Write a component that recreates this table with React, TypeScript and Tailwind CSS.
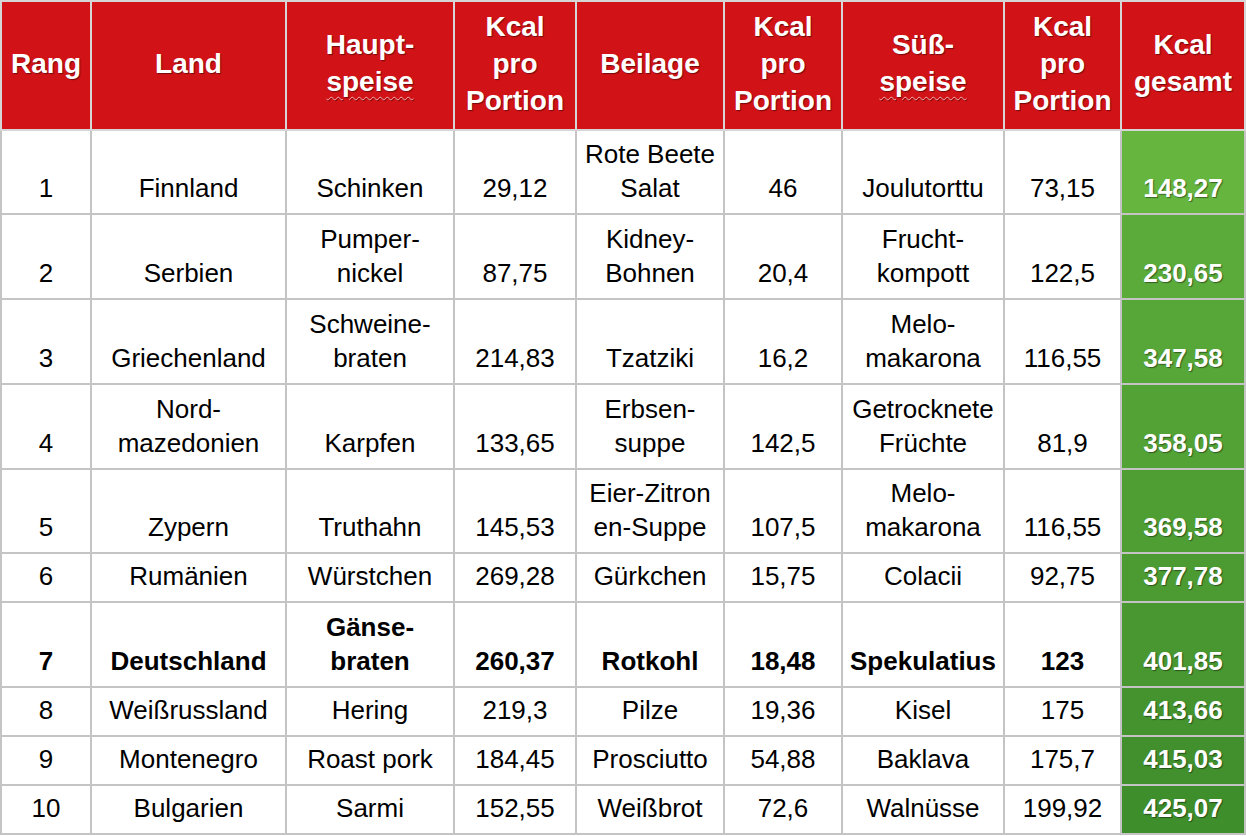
import React from 'react'

type Row = {
  rang: string
  land: string[]
  haupt: string[]
  kcal1: string
  beilage: string[]
  kcal2: string
  suess: string[]
  kcal3: string
  total: string
  h: string
  green: string
  bold?: boolean
}

const rows: Row[] = [
  { rang: '1', land: ['Finnland'], haupt: ['Schinken'], kcal1: '29,12', beilage: ['Rote Beete', 'Salat'], kcal2: '46', suess: ['Joulutorttu'], kcal3: '73,15', total: '148,27', h: 'h-[84px]', green: 'bg-[#65b53f]' },
  { rang: '2', land: ['Serbien'], haupt: ['Pumper-', 'nickel'], kcal1: '87,75', beilage: ['Kidney-', 'Bohnen'], kcal2: '20,4', suess: ['Frucht-', 'kompott'], kcal3: '122,5', total: '230,65', h: 'h-[85px]', green: 'bg-[#5bab3b]' },
  { rang: '3', land: ['Griechenland'], haupt: ['Schweine-', 'braten'], kcal1: '214,83', beilage: ['Tzatziki'], kcal2: '16,2', suess: ['Melo-', 'makarona'], kcal3: '116,55', total: '347,58', h: 'h-[85px]', green: 'bg-[#57a638]' },
  { rang: '4', land: ['Nord-', 'mazedonien'], haupt: ['Karpfen'], kcal1: '133,65', beilage: ['Erbsen-', 'suppe'], kcal2: '142,5', suess: ['Getrocknete', 'Früchte'], kcal3: '81,9', total: '358,05', h: 'h-[85px]', green: 'bg-[#53a236]' },
  { rang: '5', land: ['Zypern'], haupt: ['Truthahn'], kcal1: '145,53', beilage: ['Eier-Zitron', 'en-Suppe'], kcal2: '107,5', suess: ['Melo-', 'makarona'], kcal3: '116,55', total: '369,58', h: 'h-[84px]', green: 'bg-[#4f9e34]' },
  { rang: '6', land: ['Rumänien'], haupt: ['Würstchen'], kcal1: '269,28', beilage: ['Gürkchen'], kcal2: '15,75', suess: ['Colacii'], kcal3: '92,75', total: '377,78', h: 'h-[49px]', green: 'bg-[#4c9b32]' },
  { rang: '7', land: ['Deutschland'], haupt: ['Gänse-', 'braten'], kcal1: '260,37', beilage: ['Rotkohl'], kcal2: '18,48', suess: ['Spekulatius'], kcal3: '123', total: '401,85', h: 'h-[85px]', green: 'bg-[#489730]', bold: true },
  { rang: '8', land: ['Weißrussland'], haupt: ['Hering'], kcal1: '219,3', beilage: ['Pilze'], kcal2: '19,36', suess: ['Kisel'], kcal3: '175', total: '413,66', h: 'h-[49px]', green: 'bg-[#44932e]' },
  { rang: '9', land: ['Montenegro'], haupt: ['Roast pork'], kcal1: '184,45', beilage: ['Prosciutto'], kcal2: '54,88', suess: ['Baklava'], kcal3: '175,7', total: '415,03', h: 'h-[49px]', green: 'bg-[#41902d]' },
  { rang: '10', land: ['Bulgarien'], haupt: ['Sarmi'], kcal1: '152,55', beilage: ['Weißbrot'], kcal2: '72,6', suess: ['Walnüsse'], kcal3: '199,92', total: '425,07', h: 'h-[49px]', green: 'bg-[#3f8e2c]' },
]

const shadow = '[text-shadow:1px_1px_1px_rgba(0,0,0,0.45)]'

function Lines({ lines }: { lines: string[] }) {
  return (
    <>
      {lines.map((l, i) => (
        <React.Fragment key={i}>
          {i > 0 && <br />}
          {l}
        </React.Fragment>
      ))}
    </>
  )
}

function Head({ children }: { children: React.ReactNode }) {
  return (
    <th
      className={`border-2 border-[#d6d6d6] bg-[#d11216] text-white font-bold text-[28px] leading-[37px] align-middle text-center px-1 pb-[5px] ${shadow}`}
    >
      {children}
    </th>
  )
}

const wavy = 'underline decoration-wavy decoration-[#f3b1b1] decoration-1 underline-offset-[5px]'

export default function App() {
  return (
    <div className="w-[1246px] h-[836px] bg-white overflow-hidden" style={{ fontFamily: '"Liberation Sans", Arial, sans-serif' }}>
      <table className="table-fixed border-collapse w-[1244px]">
        <colgroup>
          <col className="w-[90px]" />
          <col className="w-[195px]" />
          <col className="w-[168px]" />
          <col className="w-[122px]" />
          <col className="w-[148px]" />
          <col className="w-[118px]" />
          <col className="w-[162px]" />
          <col className="w-[117px]" />
          <col className="w-[124px]" />
        </colgroup>
        <thead>
          <tr className="h-[129px]">
            <Head>Rang</Head>
            <Head>Land</Head>
            <Head>
              Haupt-
              <br />
              <span className={wavy}>speise</span>
            </Head>
            <Head>
              Kcal
              <br />
              pro
              <br />
              Portion
            </Head>
            <Head>Beilage</Head>
            <Head>
              Kcal
              <br />
              pro
              <br />
              Portion
            </Head>
            <Head>
              Süß-
              <br />
              <span className={wavy}>speise</span>
            </Head>
            <Head>
              Kcal
              <br />
              pro
              <br />
              Portion
            </Head>
            <Head>
              Kcal
              <br />
              gesamt
            </Head>
          </tr>
        </thead>
        <tbody>
          {rows.map((r) => {
            const cell = `border-2 border-[#c4c4c4] align-bottom text-center text-[26px] leading-[34px] pb-[8px] px-0 text-black whitespace-nowrap ${r.bold ? 'font-bold' : 'font-normal'}`
            return (
              <tr key={r.rang} className={r.h}>
                <td className={cell}>{r.rang}</td>
                <td className={cell}>
                  <Lines lines={r.land} />
                </td>
                <td className={cell}>
                  <Lines lines={r.haupt} />
                </td>
                <td className={cell}>{r.kcal1}</td>
                <td className={cell}>
                  <Lines lines={r.beilage} />
                </td>
                <td className={cell}>{r.kcal2}</td>
                <td className={cell}>
                  <Lines lines={r.suess} />
                </td>
                <td className={cell}>{r.kcal3}</td>
                <td
                  className={`border-2 border-[#c4c4c4] align-bottom text-center text-[26px] leading-[34px] pb-[8px] font-bold text-white ${r.green} ${shadow}`}
                >
                  {r.total}
                </td>
              </tr>
            )
          })}
        </tbody>
      </table>
    </div>
  )
}
